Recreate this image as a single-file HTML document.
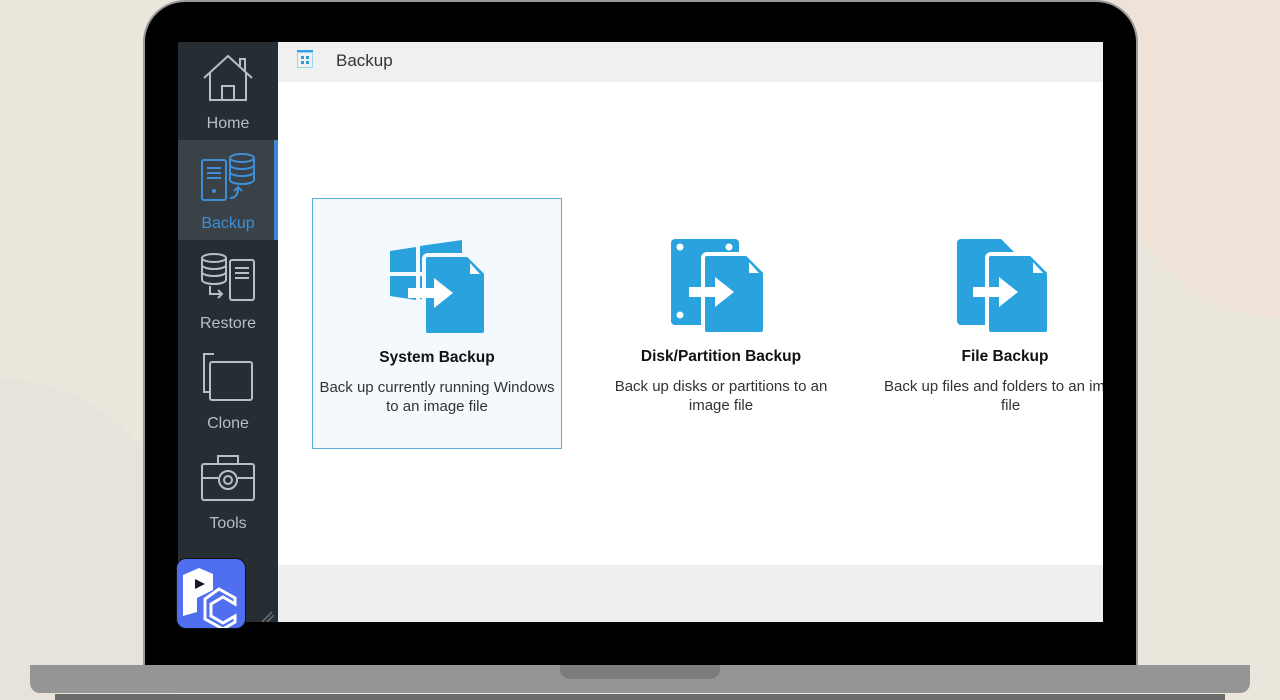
<!DOCTYPE html>
<html><head><style>
*{margin:0;padding:0;box-sizing:border-box}
body{width:1280px;height:700px;overflow:hidden;position:relative;font-family:"Liberation Sans",sans-serif;background:#ebe6dc}
.abs{position:absolute}
.nav{position:absolute;left:0;width:100px;height:100px;text-align:center;color:#b9bec3;font-size:16px}
.nav span{position:absolute;left:0;right:0;top:73px}
.nav svg{position:absolute;left:22px;top:8px}
.card{position:absolute;top:198px;width:250px;height:251px;text-align:center}
.card h3{position:absolute;top:150px;left:0;right:0;font-size:15.5px;color:#111;font-weight:bold}
.card p{position:absolute;top:179px;left:-10px;right:-10px;font-size:15px;color:#333;line-height:19px}
.card svg{position:absolute;left:75px;top:38px}
</style></head><body>
<div class="abs" style="left:1100px;top:0;width:300px;height:320px;background:#efe2d9;border-radius:0 0 0 200px"></div>
<div class="abs" style="left:0;top:380px;width:180px;height:320px;background:#e7e2da;border-radius:0 180px 0 0"></div>
<div class="abs" style="left:143px;top:0;width:995px;height:668px;background:#000;border:2px solid #9a9a9a;border-bottom:none;border-radius:42px 42px 0 0"></div>
<div class="abs" style="left:178px;top:42px;width:925px;height:580px;background:#fff;overflow:hidden">
 <div class="abs" style="left:0;top:0;width:100px;height:580px;background:#262d33"></div>
 <div class="abs" style="left:0;top:98px;width:100px;height:100px;background:#3a4147;border-right:4px solid #3f86d6"></div>
 <div class="nav" style="top:0"><svg width="56" height="56" viewBox="0 0 56 56" fill="none" stroke="#b9bec3" stroke-width="2"><path d="M4 28 L28 6 L52 28"/><path d="M10 23 V50 H46 V23"/><path d="M40 16 V9 H45 V21"/><path d="M22 50 V36 H34 V50"/></svg><span>Home</span></div>
 <div class="nav" style="top:100px;color:#3f8fd8"><svg width="56" height="56" viewBox="0 0 56 56" fill="none" stroke="#3f8fd8" stroke-width="2"><rect x="2" y="10" width="24" height="40" rx="2"/><path d="M7 18h14M7 23h14M7 28h14"/><circle cx="14" cy="41" r="1"/><ellipse cx="42" cy="8" rx="12" ry="4"/><path d="M30 8v22c0 2 5 4 12 4s12-2 12-4V8M30 15c0 2 5 4 12 4s12-2 12-4M30 22c0 2 5 4 12 4s12-2 12-4"/><path d="M30 48c4 0 8-2 8-10M34 41l4-4 4 4"/></svg><span>Backup</span></div>
 <div class="nav" style="top:200px"><svg width="56" height="56" viewBox="0 0 56 56" fill="none" stroke="#b9bec3" stroke-width="2"><ellipse cx="14" cy="8" rx="12" ry="4"/><path d="M2 8v22c0 2 5 4 12 4s12-2 12-4V8M2 15c0 2 5 4 12 4s12-2 12-4M2 22c0 2 5 4 12 4s12-2 12-4"/><rect x="30" y="10" width="24" height="40" rx="2"/><path d="M35 18h14M35 23h14M35 28h14"/><path d="M10 36v8h12M18 40l4 4-4 4"/></svg><span>Restore</span></div>
 <div class="nav" style="top:300px"><svg width="56" height="56" viewBox="0 0 56 56" fill="none" stroke="#b9bec3" stroke-width="2"><path d="M14 4H4v38h6"/><rect x="10" y="12" width="42" height="38" rx="2"/></svg><span>Clone</span></div>
 <div class="nav" style="top:400px"><svg width="56" height="56" viewBox="0 0 56 56" fill="none" stroke="#b9bec3" stroke-width="2"><rect x="2" y="14" width="52" height="36" rx="2"/><path d="M18 14V6h20v8M2 28h16M38 28h16"/><circle cx="28" cy="30" r="9"/><circle cx="28" cy="30" r="4"/></svg><span>Tools</span></div>
 <svg class="abs" style="left:82px;top:568px" width="14" height="12"><path d="M2 12L12 2M7 12L14 5" stroke="#6b7279" stroke-width="1.5"/></svg>
 <div class="abs" style="left:100px;top:0;width:825px;height:40px;background:#f0f0f0"></div>
 <svg class="abs" style="left:119px;top:8px" width="16" height="18" viewBox="0 0 16 18"><rect x="0" y="0" width="16" height="2" fill="#2aa5de"/><rect x="0.5" y="2.5" width="15" height="15" fill="none" stroke="#9fd3ee"/><rect x="4" y="6" width="3" height="3" fill="#2a9fd6"/><rect x="9" y="6" width="3" height="3" fill="#2a9fd6"/><rect x="4" y="11" width="3" height="3" fill="#2a9fd6"/><rect x="9" y="11" width="3" height="3" fill="#2a9fd6"/></svg>
 <div class="abs" style="left:158px;top:9px;font-size:17px;color:#333">Backup</div>
 <div class="abs" style="left:100px;top:523px;width:825px;height:57px;background:#efefef"></div>
 <div class="card" style="left:134px;top:156px;background:#f4f9fe;border:1px solid #5aaee0">
  <svg width="100" height="100" viewBox="0 0 100 100"><path d="M2 14l26-4v25H2z M32 9l42-6v32H32z M2 39h26v24L2 59z M32 39h42v28l-42-5z" fill="#2aa2dd"/><path d="M40 18h40l18 18v58a4 4 0 0 1-4 4H40a4 4 0 0 1-4-4V22a4 4 0 0 1 4-4z" fill="#2aa2dd" stroke="#f4f9fe" stroke-width="4"/><path d="M82 26l10 11h-10z" fill="#fff"/><path d="M20 51h26v-10l19 15-19 15v-10H20z" fill="#fff"/></svg>
  <h3>System Backup</h3><p>Back up currently running Windows<br>to an image file</p></div>
 <div class="card" style="left:418px;top:156px">
  <svg width="100" height="100" viewBox="0 0 100 100"><rect x="0" y="3" width="68" height="86" rx="4" fill="#2aa2dd"/><circle cx="9" cy="11" r="3.5" fill="#fff"/><circle cx="58" cy="11" r="3.5" fill="#fff"/><circle cx="9" cy="79" r="3.5" fill="#fff"/><path d="M36 18h40l18 18v58a4 4 0 0 1-4 4H36a4 4 0 0 1-4-4V22a4 4 0 0 1 4-4z" fill="#2aa2dd" stroke="#fff" stroke-width="4"/><path d="M78 26l10 11h-10z" fill="#fff"/><path d="M18 51h26v-10l19 15-19 15v-10H18z" fill="#fff"/></svg>
  <h3>Disk/Partition Backup</h3><p>Back up disks or partitions to an<br>image file</p></div>
 <div class="card" style="left:702px;top:156px;width:300px">
  <svg width="100" height="100" viewBox="0 0 100 100" style="left:75px"><path d="M6 3h40l16 16v66a4 4 0 0 1-4 4H6a4 4 0 0 1-4-4V7a4 4 0 0 1 4-4z" fill="#2aa2dd"/><path d="M36 18h40l18 18v58a4 4 0 0 1-4 4H36a4 4 0 0 1-4-4V22a4 4 0 0 1 4-4z" fill="#2aa2dd" stroke="#fff" stroke-width="4"/><path d="M78 26l10 11h-10z" fill="#fff"/><path d="M18 51h26v-10l19 15-19 15v-10H18z" fill="#fff"/></svg>
  <h3 style="width:250px">File Backup</h3><p style="width:280px;left:4px;white-space:nowrap;text-align:left">Back up files and folders to an image<br><span style="padding-left:117px">file</span></p></div>
</div>
<div class="abs" style="left:176px;top:558px;width:70px;height:71px;background:#4f6ef0;border:1px solid #111;border-radius:10px;overflow:hidden">
 <svg width="70" height="71" viewBox="0 0 70 71"><path d="M6 16l16-7 14 6v16l-16 8v14l-14 4z" fill="#fff"/><path d="M18 20l10 5-10 5z" fill="#1a1a2a"/><path d="M42 30l16 9v6l-12-7-12 7v12l12 7 12-7v6l-12 7-18-10V40z" fill="none" stroke="#fff" stroke-width="3"/></svg>
</div>
<div class="abs" style="left:30px;top:665px;width:1220px;height:28px;background:#959595;border-radius:0 0 10px 10px"></div>
<div class="abs" style="left:560px;top:665px;width:160px;height:14px;background:#7c7c7c;border-radius:0 0 10px 10px"></div>
<div class="abs" style="left:55px;top:694px;width:1170px;height:6px;background:#6b6b6b"></div>
</body></html>
